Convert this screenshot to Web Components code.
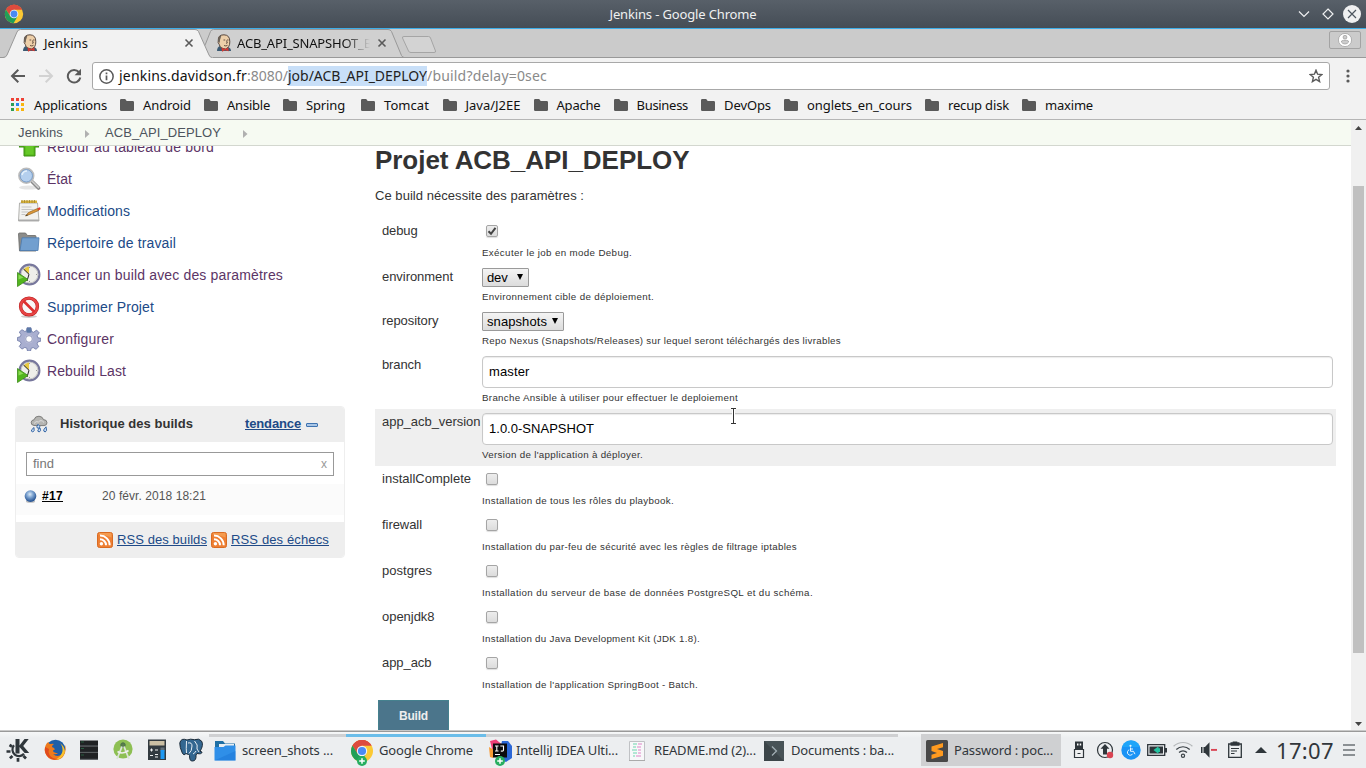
<!DOCTYPE html>
<html lang="fr">
<head>
<meta charset="utf-8">
<title>Jenkins</title>
<style>
html,body{margin:0;height:768px;width:1366px;overflow:hidden;background:#fff}
body{font-family:"Noto Sans",sans-serif;display:flex;flex-direction:column}
</style>
</head>
<body>
<window-title></window-title>
<browser-tabs></browser-tabs>
<address-bar></address-bar>
<bookmark-bar></bookmark-bar>
<jenkins-page></jenkins-page>
<task-bar></task-bar>
<script>
const chrome = `<circle cx="12" cy="12" r="11" fill="#fbc934"/><path d="M12 12 2.5 6.5A11 11 0 0 1 21.5 6.5H12z" fill="#dd4b3e"/><path d="M12 1A11 11 0 0 1 21.6 6.6H12L7.4 14.8 2.4 6.6A11 11 0 0 1 12 1z" fill="#dd4b3e"/><path d="M2.4 6.6A11 11 0 0 0 11.5 23L16.3 14.6 7.5 14.6z" fill="#219f58"/><circle cx="12" cy="12" r="5.2" fill="#f4f4f4"/><circle cx="12" cy="12" r="4.1" fill="#4a8af4"/>`;
const plus = `<circle cx="12" cy="22" r="5" fill="#27ae60"/><path d="M12 19.2v5.6M9.2 22h5.6" stroke="#fff" stroke-width="1.5"/>`;
const clock = `<circle cx="12.5" cy="11.5" r="9.9" fill="#eeeeea" stroke="#77779c" stroke-width="2.100"/><circle cx="12.5" cy="11.5" r="8.4" fill="none" stroke="#b8b8b8" stroke-width=".7"/><path d="M12 11 6.6 6.6A8 8 0 0 1 12 3.6z" fill="#e7c840"/><path d="M6.5 6 12 11.3M12 11.3 10 18" stroke="#222" stroke-width="1"/><path d="M12.5 4v1M19 11.5h1M12.5 19v-1" stroke="#999"/><path d="M.5 9.5v14L11 16.5z" fill="#52b51e" stroke="#3c8a18" stroke-width=".8"/><path d="M1.5 11.5v5l5-2z" fill="#8bdc55"/>`;
const rss = `<rect x=".5" y=".5" width="15" height="15" rx="2" fill="#ee7f33" stroke="#d96b22"/><path d="M1.5 2.5q6 0 13 3V2q0-1-1-1H2.500z" fill="#f9ae63" opacity=".6"/><circle cx="4.4" cy="11.7" r="1.7" fill="#fff"/><path d="M3 7.2a6 6 0 0 1 6 6M3 3.6a9.600 9.600 0 0 1 9.700 9.600" fill="none" stroke="#fff" stroke-width="2"/>`;
const ICONS = {
chrome:['0 0 24 24',chrome],
chromeplus:['0 0 24 28',chrome+plus],
jenkins:['0 0 16 18',`<path d="M1 17q0-4 3-5l8 1q3 1 3 4z" fill="#3b5a72"/><path d="M2.300 6Q2 .8 8 .8q6 .2 5.800 7 .2 5.500-4.300 7.200Q4 14.500 3.300 10.500 1.500 9 2.300 6z" fill="#edcfa9" stroke="#4b3a32" stroke-width=".9"/><path d="M2.200 7.500Q1.500 2 5.500 1.200 4.600 4 4 6l-.3 3z" fill="#6b6259"/><path d="M7.500 6h1.700M11 6h1.500M8 11.500q2 1 3.500-.2M10.500 6.500l.8 2.500-1.300.3" fill="none" stroke="#4a362e" stroke-width=".8"/><path d="M5.500 13.600 9 15l3.300-1.500.4 3.700L9 16.200l-3 1.600z" fill="#cf3b33"/>`],
x:['0 0 10 10','<path d="M1.500 1.500l7 7M8.500 1.500l-7 7" stroke="#5a5a5a" stroke-width="1.600"/>'],
min:['0 0 12 12','<path d="M1 3.500l5 5 5-5" fill="none" stroke="#eff0f1" stroke-width="1.200"/>'],
max:['0 0 12 12','<path d="M6 1l5 5-5 5-5-5z" fill="none" stroke="#eff0f1" stroke-width="1.200"/>'],
close:['0 0 18 18','<circle cx="9" cy="9" r="9" fill="#eff0f1"/><path d="M5 5l8 8M13 5l-8 8" stroke="#4d565f" stroke-width="1.200"/>'],
user:['0 0 14 14','<circle cx="7" cy="7" r="6.600" fill="#fff" stroke="#a5a5a5" stroke-width=".8"/><circle cx="7" cy="4.200" r="1.900" fill="#ccc" stroke="#999" stroke-width=".7"/><path d="M3.300 9q0-1.600 2-1.600h3.400q2 0 2 1.600Q9.500 11 7 11T3.300 9z" fill="#ccc" stroke="#999" stroke-width=".7"/>'],
back:['0 0 16 16','<path d="M15 8H2.500M8.300 1.700 2 8l6.300 6.300" fill="none" stroke="#5a5a5a" stroke-width="2"/>'],
fwd:['0 0 16 16','<path d="M1 8h12.500M7.700 1.700 14 8l-6.300 6.300" fill="none" stroke="#d2d2d2" stroke-width="2"/>'],
reload:['0 0 16 16','<path d="M13 4.200A6.300 6.300 0 1 0 14.300 9.500" fill="none" stroke="#5a5a5a" stroke-width="2"/><path d="M15 .8v6.400H8.600z" fill="#5a5a5a"/>'],
info:['0 0 14 14','<circle cx="7" cy="7" r="6.200" fill="none" stroke="#5a5a5a" stroke-width="1.400"/><path d="M7 6v4.500M7 3.300v1.600" stroke="#5a5a5a" stroke-width="1.600"/>'],
star:['0 0 14 14','<path d="M7 1.200 8.600 5.200l4.300.3-3.300 2.800 1 4.300L7 10.300l-3.600 2.300 1-4.300L1.100 5.500l4.300-.3z" fill="none" stroke="#5a5a5a" stroke-width="1.400"/>'],
dots:['0 0 4 14','<g fill="#5a5a5a"><circle cx="2" cy="2" r="1.600"/><circle cx="2" cy="7" r="1.600"/><circle cx="2" cy="12" r="1.600"/></g>'],
apps:['0 0 13 13','<path fill="#ee4135" d="M0 0h3v3H0zM5 0h3v3H5zM10 0h3v3h-3z"/><path fill="#2f9e54" d="M0 5h3v3H0zM0 10h3v3H0z"/><path fill="#2b86ee" d="M5 5h3v3H5z"/><path fill="#f8b50f" d="M10 5h3v3h-3zM5 10h3v3H5zM10 10h3v3h-3z"/>'],
folder:['0 0 14 12','<path d="M0 1.300Q0 0 1.200 0h4l1.500 2H12.700Q14 2 14 3.200v7.600Q14 12 12.700 12H1.200Q0 12 0 10.700z" fill="#5a5a5a"/>'],
crumb:['0 0 5 8','<path d="M0 0v8l4.500-4z" fill="#b0b0b0"/>'],
up:['0 0 24 24','<path d="M12 1 22 12h-4v9H7v-9H2z" fill="#53b618" stroke="#3f8f15"/><path d="M8.500 5v14.500h8V8z" fill="#66c828"/>'],
search:['0 0 24 24','<ellipse cx="12" cy="20.500" rx="10" ry="2" fill="#e5e5e5"/><path d="M15.500 15l6 6" stroke="#8a8a8a" stroke-width="3.600" stroke-linecap="round"/><path d="M15.500 14.500l6 6" stroke="#cfcfcf" stroke-width="1.700" stroke-linecap="round"/><circle cx="9.300" cy="8.800" r="7.200" fill="#a9c8ec" stroke="#bcbcbc" stroke-width="2"/><circle cx="9.300" cy="8.800" r="6.200" fill="#b4cfee" stroke="#6d93c0" stroke-width=".8"/><path d="M5 8q1-4 5-4" stroke="#e4f0fb" stroke-width="1.500" fill="none"/>'],
notes:['0 0 24 24','<path d="M2.500 4h18l1.500 18H1.500z" fill="#f2f2f0" stroke="#a0a09c" stroke-width=".8"/><path d="M1.500 20.500h20.500v1.500H1.500z" fill="#aaa"/><path d="M4 1.500h16v2.500H4z" fill="#d8b33c"/><path d="M5 1v3M7.500 1v3M10 1v3M12.500 1v3M15 1v3M17.500 1v3" stroke="#a5872b" stroke-width=".8"/><path d="M4.500 8h10M4.500 10.500h12M4.500 13h7M4.500 15.500h4" stroke="#c5c5c5"/><path d="M8.500 17l3-3.500 9-4 1 2-9 4z" fill="#e09a3a" stroke="#8c6023" stroke-width=".7"/><path d="M20.500 9.500 22.500 8.300q1.500.5 1 2l-2 1.200z" fill="#e03a28"/><path d="M8.500 17l1.500-1.700.8 1.200z" fill="#333"/>'],
work:['0 0 24 24','<path d="M1.500 3q0-1 1-1h6l2 2.500h7.500q1 0 1 1V20H2.500z" fill="#8c8c8a" stroke="#696967" stroke-width=".8"/><path d="M5 6.800h17L21 19.500H3z" fill="#729fcf" stroke="#4a7ab0" stroke-width=".8"/>'],
run:['0 0 24 24',clock],
deny:['0 0 24 24','<ellipse cx="12" cy="21.500" rx="8" ry="1.500" fill="#ccc"/><circle cx="12" cy="11.500" r="8.400" fill="#f8f8f8" stroke="#b82020" stroke-width="3.400"/><circle cx="12" cy="11.500" r="8.400" fill="none" stroke="#e84545" stroke-width="2.400"/><path d="M6.500 6l11 11" stroke="#dd3030" stroke-width="2.600"/>'],
gear:['0 0 24 24','<path d="M10 .8h4l.6 3.700 2 .8 3-2.200 2.600 2.700-2.100 3 .8 2 3 .5v2.800l-3 .8-.9 2 1.800 2.700-2.800 2.700-2.800-1.800-2 .8-.7 2.700h-3l-.7-2.800-2-.8-2.900 1.700-2.600-2.600 1.800-2.900-.8-2L.4 13.500v-3L3.200 9.800l.9-2L2.300 5 5 2.700l2.800 1.800 1.700-.7z" fill="#a9afd0" stroke="#7580ab" stroke-width=".9"/><path d="M10 .8h4l.6 4.500q-2.600 1-5.200 0z" fill="#5c7aa8"/><circle cx="12" cy="12" r="4.200" fill="#c5c8e0"/><circle cx="12" cy="12" r="3.300" fill="#fff" stroke="#8089b0" stroke-width=".8"/>'],
rain:['0 0 18 18','<path d="M4 10.500Q.8 10 1.200 7.200 1.500 5 4 4.800 5 1 9 1.200q3.500.2 4.500 3.400 3.500.2 3.500 3.200 0 2.500-3 2.800z" fill="#b5b5b2" stroke="#757573" stroke-width=".9"/><path d="M4 8.500q2-3 4.500-1.500Q11 4 14 7.500" fill="none" stroke="#dedede"/><g fill="#cfe0f3" stroke="#3465a4" stroke-width="1"><path d="M8 9.300q3 2 1 4-2 .3-2.200-1.500zM4 12.500q.8 4-1.200 4.500-2.300-.5-1-2.400zM10 12.800q1.500 3.500-.8 4.200-2.300-.5-1-2.400zM16 11.800q1.500 4.500-.8 5.200-2.300-.5-1.200-2.700z"/></g>'],
collapse:['0 0 12 4','<rect x=".5" y=".5" width="11" height="3" rx=".5" fill="#a9c6e6" stroke="#3f73b0"/>'],
ball:['0 0 14 14','<defs><radialGradient id="g" cx=".45" cy=".35" r=".6"><stop offset="0" stop-color="#dcebf8"/><stop offset=".45" stop-color="#7fa5d2"/><stop offset="1" stop-color="#2a5796"/></radialGradient></defs><ellipse cx="7" cy="12.500" rx="5" ry="1.300" fill="#bbb"/><circle cx="7" cy="6.500" r="6.300" fill="url(#g)"/>'],
rss:['0 0 16 16',rss],
kde:['0 0 24 24','<path d="M8 7.300a6 6 0 1 0 10 8.500" fill="none" stroke="#2f363b" stroke-width="2.200"/><path d="M6 8.500 3.500 7M4.500 13.500H.5M6.500 18l-2.600 2.300M12 20v3.800M17.500 18l2.500 2.500" stroke="#2f363b" stroke-width="2.700"/><path d="M9.500 1h4v6.500L18.500 1h4.200l-5.500 7 6 7h-4.500l-5.200-6v6.500h-4z" fill="#2f363b"/>'],
firefox:['0 0 24 24','<circle cx="12.500" cy="11.500" r="9.800" fill="#1f5fa8"/><path d="M4 5Q1 9 2 14q2 7 9 8 8 .5 10.500-6 2-5 .5-9 .5 7-3 9.500-5 3-9-.5 3 1 5-1-4 0-5-2 0-1.500 2-1.500-.500-2-3-2.500 0-2 2-3-2-.500-3 0Q5.500 6.500 5.500 4z" fill="#ee7a1c"/><path d="M17 5q6 5 4.500 10-2 6-9.500 7 7-4 7.500-9 .3-5-2.500-8z" fill="#fac22c"/><path d="M2 9q-1 6 3 10 5 4 10 2-6 0-8.500-4Q5 13 6 11z" fill="#e14b1d"/>'],
rack:['0 0 24 24','<path d="M3 2.500h18v5.300H3zM3 8.300h18v5.800H3zM3 14.600h18v6.900H3z" fill="#202224"/><path d="M3 7.800h18M3 14.200h18M3 21h18" stroke="#3c4145" stroke-width=".9"/><path d="M4 4h3M4 10.500h3M4 17h3" stroke="#2a6a45" stroke-width=".8"/>'],
studio:['0 0 24 24','<circle cx="12" cy="11" r="9.600" fill="#8dbf53"/><circle cx="12" cy="7" r="2.200" fill="#5a7f4c" stroke="#49704a"/><path d="M11 8.500 6 21M13 8.500 18 21" stroke="#dce4d8" stroke-width="1.800"/><path d="M6.500 13.500q5 3.500 11-1" fill="none" stroke="#eee" stroke-width="1.600"/>'],
calc:['0 0 24 24','<path d="M3 1.500h18v20.500H3z" fill="#323a40"/><path d="M4.500 3h15v4.500h-15z" fill="#cbbfa4"/><path d="M15.500 9.500h4v4h-4z" fill="#63707a"/><path d="M15.500 12h4v9h-4z" fill="#1d99f3"/><path d="M5 12h3M6.500 10.500v3M10 12h3M5 17.500h3M10 16.500h3M10 19h3" stroke="#eee"/>'],
pg:['0 0 24 24','<path d="M8 2Q2-.5.800 5 .5 9 3.500 15.500 5 18 7 15.500l1 .5q2 0 2.500 1.500 0 6 3 5.500 4 0 3.500-6l1-1.500q5 1 5-1.500l-2-.7Q25 7 22.500 3 20 0 15.500 1.700q-4-1.200-7.500.3z" fill="#336791" stroke="#1d2c3a"/><path d="M7.500 3Q7 12 7.500 15M9 5q4-1 4 3 0 5-3 7.500M15.500 3q4 4 2.500 8l2 3M14 16q2-1 3-3" fill="none" stroke="#e8eef4" stroke-width="1"/>'],
dir:['0 0 24 24','<path d="M2 2h8l2 2.500h10V12H2z" fill="#1e6fa5"/><path d="M6 5h15v3H6z" fill="#e9eef2"/><path d="M1.500 8h9l2-1.500H22.500V21.500h-21z" fill="#2f8fe8"/><path d="M1.500 21.500 22.500 12v9.500z" fill="#1c75d6" opacity=".5"/>'],
ij:['0 0 24 28','<path d="M2 2 8 .5l6 5L9 18l-7-1L4 10z" fill="#ef3f76"/><path d="M1 8l7 4-3 7-3-1z" fill="#f89b35"/><path d="M14 2h6l4 5v12l-6 4-8-3z" fill="#2b67d6"/><path d="M5 4.500h14v14H5z" fill="#0b0b0d"/><path d="M7 7h3.500M8.800 7v5M7 12h3.500M12.300 7h3.200v4q0 1.500-2.700 1M7 15.500h5" fill="none" stroke="#fff" stroke-width="1.100"/>'+plus],
readme:['0 0 24 24','<path d="M4.500 2.500h15V21.500h-15z" fill="#f8f8fa" stroke="#c0c2c5"/><path d="M4 21.500h16" stroke="#aaa"/><path d="M8 5h4M8 8h3M7 11h5M8 14h4M8 17h2" stroke="#9be0c8" stroke-width="1.500"/><path d="M13 5h4M12 8h4M13 11h3M13 14h3M11 17h5" stroke="#e7abd9" stroke-width="1.500"/>'],
term:['0 0 24 24','<path d="M2 2h20v20H2z" fill="#3c4549"/><path d="M2 2h20v20z" fill="#485357"/><path d="M10 7.500l4.500 4.500L10 16.500" fill="none" stroke="#a5b1b6" stroke-width="1.200"/>'],
sublime:['0 0 24 24','<rect x="1" y="1" width="22" height="22" rx="1.500" fill="#484848"/><path d="M6.500 7.500 18 4v4.200L12 10l6 2v4.700L6.500 20v-4.200L12 14l-5.500-2z" fill="#ff9a1f"/>'],
usb:['0 0 20 20','<path d="M6 1.500h8V9H6z" fill="#2f363b"/><path d="M8 3.500h1.500v2H8zM10.700 3.500h1.500v2h-1.500z" fill="#fff"/><path d="M5.500 9.500h9v8h-9z" fill="#eff0f1" stroke="#2f363b" stroke-width="1.200"/><path d="M8.500 13.500h3" stroke="#2f363b"/>'],
upd:['0 0 20 20','<circle cx="10" cy="10" r="7.500" fill="none" stroke="#2f363b" stroke-width="1.200"/><path d="M10 4l4.500 4.700H12v5.800H8V8.700H5.500z" fill="#2f363b"/><circle cx="15" cy="15" r="3.200" fill="#da4453"/>'],
acc:['0 0 20 20','<circle cx="10" cy="10" r="9.700" fill="#1a93f5"/><path d="M1 7A9.500 9.500 0 0 1 19 7z" fill="#23b0fb" opacity=".6"/><circle cx="9.500" cy="5.800" r="1.100" fill="#e8f5ff"/><path d="M9.500 7.500v3.800h3l1.500 2.900M9.500 9h2.500M8.200 9.800a2.800 2.800 0 1 0 3.500 3.900" fill="none" stroke="#e8f5ff" stroke-width="1"/>'],
bat:['0 0 20 20','<path d="M.700 4.700h17v10.600H.7z" fill="none" stroke="#2f363b" stroke-width="1.300"/><path d="M2.500 6.500h13.500v7H2.500z" fill="#2f363b"/><path d="M18 8h2v4.500h-2z" fill="#2f363b"/><path d="M6.500 10l5-3.800v2h1.500v3.700h-1.500v2z" fill="#24c3a0"/>'],
wifi:['0 0 20 20','<g fill="none" stroke="#3b4247" stroke-width="1.200"><circle cx="10" cy="15.800" r="1.600"/><path d="M6 12.500a5.600 5.600 0 0 1 8 0M3.300 9.500a9.500 9.500 0 0 1 13.400 0"/><path d="M.600 6.300a13.500 13.500 0 0 1 18.800 0" stroke="#b5b8ba"/></g>'],
vol:['0 0 20 20','<path d="M2 7h1.500v6H2zM4.500 7H6l4.500-4.800v15.600L6 13H4.500z" fill="#2f363b"/><path d="M12 9.900h6" stroke="#da4453" stroke-width="1.900"/>'],
clip:['0 0 20 20','<path d="M3.700 4h12.600v13.300H3.700z" fill="none" stroke="#2f363b" stroke-width="1.300"/><path d="M5.500 2.200h2.200V1.500h4.600v.7h2.200v3.600h-9z" fill="#2f363b"/><path d="M6 8.500h8M6 11h6M6 13.500h3.500" stroke="#2f363b" stroke-width="1.200"/>'],
tri:['0 0 20 20','<path d="M4 13 10 7l6 6z" fill="#2f363b"/>'],
menu:['0 0 12 12','<path d="M0 1h12M0 6h12M0 11h12" stroke="#8b9094" stroke-width="2"/>'],
beam:['0 0 7 18','<path d="M1 1h5M1 17h5M3.500 1v16" fill="none" stroke="#fff" stroke-width="3"/><path d="M1 1.500h5M1 16.500h5M3.500 1.500v15" fill="none" stroke="#333" stroke-width="1"/>']
};
const ic = (n,w,h) => `<ui-icon name="${n}" w="${w}" h="${h||w}"></ui-icon>`;
const ft = (t,w,c='') => `<fit-text w="${w}" class="${c}">${t}</fit-text>`;
class Base extends HTMLElement {
  connectedCallback(){
    if(this.shadowRoot) return;
    const t = document.createElement('template');
    t.innerHTML = `<style>*{box-sizing:border-box}:host{display:block;box-sizing:border-box}${this.css()}</style>${this.html()}`;
    this.attachShadow({mode:'open'}).append(t.content.cloneNode(true));
  }
  a(n){return this.getAttribute(n)||''}
}
const def = (n,css,html) => customElements.define(n, class extends Base {
  css(){return typeof css==='function'?css(this):css}
  html(){return typeof html==='function'?html(this):html}
});

def('ui-icon', e=>`:host{flex:none;width:${e.a('w')}px;height:${e.a('h')}px}svg{display:block;width:100%;height:100%}`,
  e=>{const [vb,body]=ICONS[e.a('name')];return `<svg viewBox="${vb}" aria-hidden="true">${body}</svg>`});

def('window-title',`:host{height:29px;flex:none;background:linear-gradient(#586069,#454d56);border-bottom:1px solid #3daee9}
.bar{display:grid;grid-template-columns:84px 1fr 84px;height:28px;align-items:center;color:#eff0f1;font-size:13px;line-height:18px}
.l{padding-left:4px}.m{display:flex;justify-content:center}.r{display:flex;align-items:center;justify-content:flex-end;padding-right:5px;gap:12px}.r ui-icon:last-child{margin-left:-3px}`,
`<div class="bar"><div class="l">${ic('chrome',20)}</div><div class="m">${ft('Jenkins - Google Chrome',147)}</div><div class="r">${ic('min',12)}${ic('max',12)}${ic('close',18)}</div></div>`);

def('browser-tabs',`:host{height:29px;flex:none;background:#cbcbcb;display:grid}svg,.row{grid-area:1/1}svg{width:1366px;height:29px;display:block}
.row{z-index:1;display:flex;align-items:center;height:28px;font-size:13px;line-height:18px;color:#111;padding-left:22px}
.t2{-webkit-mask-image:linear-gradient(90deg,#000 112px,transparent 138px);mask-image:linear-gradient(90deg,#000 112px,transparent 138px);width:138px}
.u{margin:-7px 5px 0 auto;width:32px;height:18px;border:1px solid #a3a3a3;border-radius:2px;display:grid;place-items:center}
fit-text{margin:-1px 0 0 6px}.t2 fit-text{margin-left:5px}`,
`<svg viewBox="0 0 1366 29"><path d="M0 28.500H1366" stroke="#999"/><path d="M198 28.500 205.500 15l5-12.500q.8-2 3-2H388q2.500 0 3.500 2l10 24q1 2 3 2z" fill="#d0d0d0" stroke="#999"/><path d="M3 29q3-.5 4-3L17 3q1-2.500 3.500-2.500H195q2.500 0 3.500 2L209 26q1 2.500 3.500 2.500V30H3z" fill="#f2f2f2"/><path d="M0 28.500H3q3 0 4-2.500L17 3q1-2.500 3.500-2.500H195q2.500 0 3.500 2L209 26q1 2.500 3 2.500" fill="none" stroke="#999"/><path d="M404 7.500h24.500q1.500 0 2 1.500l5 13q.5 1.500-1.500 1.500H411q-2 0-2.500-1.500l-6-13q-.5-1.500 1.500-1.500z" fill="#d3d3d3" stroke="#a5a5a5"/></svg>
<div class="row">${ic('jenkins',16,18)}${ft('Jenkins',44)}<span style="width:96px"></span>${ic('x',10)}<span style="width:22px"></span>${ic('jenkins',16,18)}<div class="t2">${ft('ACB_API_SNAPSHOT_B',135)}</div><span style="width:7px"></span>${ic('x',10)}<div class="u">${ic('user',14)}</div></div>`);

def('address-bar',`:host{height:34px;flex:none;background:#f2f2f2}
.row{display:flex;align-items:center;height:34px;padding:2px 0 0 10px}.n{display:flex;gap:12px;width:82px}
.box{width:1238px;height:28px;border:1px solid #a8a8a8;border-radius:3px;background:#fff;display:flex;align-items:center;padding:0 6px 0 6px;font-size:14px;line-height:20px;color:#8a8a8a}
.d{color:#111;margin-left:5px}.s{background:#c8dff8;color:#222}.st{margin-left:auto}.k{margin-left:16px}`,
`<div class="row"><div class="n">${ic('back',16)}${ic('fwd',16)}${ic('reload',16)}</div><div class="box">${ic('info',15)}${ft('jenkins.davidson.fr',128,'d')}${ft(':8080/',41)}${ft('job/ACB_API_DEPLOY',139,'s')}${ft('/build?delay=0sec',120)}<div class="st">${ic('star',14)}</div></div><div class="k">${ic('dots',4,14)}</div></div>`);

def('bookmark-bar',`:host{height:28px;flex:none;background:#f2f2f2;border-bottom:1px solid #b5b5b5;font-size:13px;line-height:18px;color:#111}
.row{display:flex;align-items:center;height:25px;padding-left:11px}.row>div{display:flex;align-items:center;margin-right:13px;gap:9px}.row>.ap{gap:10px}`,
`<div class="row"><div class="ap">${ic('apps',13)}${ft('Applications',73)}</div>${[['Android',48],['Ansible',43],['Spring',39,16],['Tomcat',45,13.500],['Java/J2EE',55],['Apache',44],['Business',51.500],['DevOps',47],['onglets_en_cours',105],['recup disk',61],['maxime',48]].map(b=>`<div style="margin-right:${b[2]||13}px">${ic('folder',14,12)}${ft(b[0],b[1])}</div>`).join('')}</div>`);

def('bread-crumbs',`:host{height:26px;background:#f6faf2;border-bottom:1px solid #d3d7cf;font-size:13px;line-height:18px;color:#4d545d}.r{display:flex;align-items:center;height:25px;padding-left:18px}ui-icon{margin:2px 0 0 22px}.b{margin-left:15px}`,
`<div class="r">${ft('Jenkins',45)}${ic('crumb',5,8)}${ft('ACB_API_DEPLOY',116,'b')}${ic('crumb',5,8)}</div>`);

def('side-tasks',`:host{margin-top:-15px}a{display:flex;align-items:center;height:32px;gap:6px;padding-left:17px;font-size:14px;line-height:18px;color:#204a87}a.v{color:#5c3566}`,
()=>[['up','Retour au tableau de bord',167,1],['search','État',25,1],['notes','Modifications',83],['work','Répertoire de travail',129],['run','Lancer un build avec des paramètres',236,1],['deny','Supprimer Projet',107],['gear','Configurer',67,1],['run','Rebuild Last',79,1]].map(i=>`<a class="${i[3]?'v':''}">${ic(i[0],24)}${ft(i[1],i[2])}</a>`).join(''));

def('build-history',`:host{margin:19px 0 0 15px;width:330px;height:152px;border:1px solid #eee;border-radius:4px;overflow:hidden;font-size:13px;line-height:18px;background:#fff}
.h{height:35px;background:#eee;display:flex;align-items:center;padding:0 0 1px 14px;font-weight:bold;color:#333}.h .t{margin-left:12px}.h .a{margin:0 5px 0 52px;color:#204a87;text-decoration:underline}.h ui-icon:last-child{margin-top:1px}
.i{margin:10px 10px 8px;height:24px;border:1px solid #999;display:flex;align-items:center;justify-content:space-between;padding:0 6px;color:#777}
.i span{font-size:12px;color:#999}
.b{height:31px;background:#fbfbfb;display:flex;align-items:flex-start;padding:3px 0 0 8px;font-size:12px;color:#555}.b ui-icon{margin-top:3px}.b .n{font-weight:bold;color:#000;text-decoration:underline;margin:0 39px 0 5px}
.f{margin-top:7px;height:36px;background:#eee;display:flex;align-items:center;justify-content:flex-end;padding-right:15px;color:#204a87;gap:4px}.f fit-text{text-decoration:underline}`,
`<div class="h">${ic('rain',18)}${ft('Historique des builds',133,'t')}${ft('tendance',56,'a')}${ic('collapse',12,4)}</div><div class="i">${ft('find',21)}<span>x</span></div><div class="b">${ic('ball',13)}${ft('#17',21,'n')}${ft('20 févr. 2018 18:21',104)}</div><div class="f">${ic('rss',16)}${ft('RSS des builds',90)}${ic('rss',16)}${ft('RSS des échecs',98)}</div>`);

def('param-row',e=>`:host{display:flex;height:${{check:46,select:44,text:57}[e.a('kind')]}px;font-size:13px;line-height:18px;color:#333;padding-left:7px}
:host([hot]){background:#efefef}.l{width:100px;padding-top:4px}.c{flex:none;width:851px}
.check{width:12px;height:12px;margin:7px 0 0 4px;border:1px solid #a5a5a5;border-radius:2px;background:linear-gradient(#ededed,#dcdcdc);box-shadow:0 1px 1px #0002}.check svg{display:block;width:10px;height:10px}
.select{display:flex;align-items:center;justify-content:space-between;margin-top:4px;height:19px;border:1px solid #9a9a9a;border-radius:1px;background:linear-gradient(#f4f4f4,#dcdcdc);padding:0 5px 0 4px;width:${e.a('bw')}px;color:#000}.select svg{width:6px;height:6px;margin-top:-2px}
.text{display:flex;align-items:center;margin-top:4px;height:32px;border:1px solid #c8c8c8;border-radius:4px;background:#fff;box-shadow:inset 0 1px 1px #00000014;padding:0 6px;color:#000}
.d{font-size:9.750px;line-height:12px;color:#333;margin-top:${{check:10,select:4,text:4}[e.a('kind')]}px}`,
e=>{const k=e.a('kind'),v=e.a('val');const inner=k==='check'?(v?'<svg viewBox="0 0 10 10"><path d="M1.500 5.200l2.500 2.600 4.500-6" fill="none" stroke="#444" stroke-width="2"/></svg>':''):ft(v,e.a('vw'))+(k==='select'?'<svg viewBox="0 0 6 6"><path d="M0 0h6L3 6z" fill="#000"/></svg>':'');
return `<div class="l">${ft(e.a('label'),e.a('lw'))}</div><div class="c"><div class="${k}">${inner}</div><div class="d">${ft(e.a('desc'),e.a('dw'))}</div></div>`});

def('param-form',`:host{width:961px;margin-left:30px;font-size:13px;line-height:20px;color:#333}
h1{margin:0;font-size:26px;line-height:29px;height:30px}p{margin:10px 0 12px}.btn{margin:4px 0 0 3px;width:71px;height:32px;background:#4b758b;border:1px solid #45818e;display:grid;place-items:center;color:#eee;font-weight:bold;font-size:12px}.cur{position:absolute;left:730px;top:287px}`,
()=>{const r=[['check','debug',35.500,'1',0,0,'Exécuter le job en mode Debug.',150],['select','environment',71,'dev',20.500,47,'Environnement cible de déploiement.',172],['select','repository',56.500,'snapshots',60,82,'Repo Nexus (Snapshots/Releases) sur lequel seront téléchargés des livrables',359],['text','branch',39,'master',40.500,0,'Branche Ansible à utiliser pour effectuer le deploiement',256],['text','app_acb_version',98.500,'1.0.0-SNAPSHOT',105,0,"Version de l'application à déployer.",161],['check','installComplete',89,'',0,0,'Installation de tous les rôles du playbook.',192],['check','firewall',40,'',0,0,'Installation du par-feu de sécurité avec les règles de filtrage iptables',315],['check','postgres',50,'',0,0,'Installation du serveur de base de données PostgreSQL et du schéma.',331],['check','openjdk8',52.500,'',0,0,'Installation du Java Development Kit (JDK 1.8).',218],['check','app_acb',49.500,'',0,0,"Installation de l'application SpringBoot - Batch.",216]];
return `<h1>${ft('Projet ACB_API_DEPLOY',314.500)}</h1><p>${ft('Ce build nécessite des paramètres :',209)}</p>`+r.map((x,i)=>`<param-row kind="${x[0]}" label="${x[1]}" lw="${x[2]}" val="${x[3]}" vw="${x[4]}" bw="${x[5]}" desc="${x[6]}" dw="${x[7]}"${i===4?' hot':''}></param-row>`).join('')+`<div class="btn">${ft('Build',29)}</div><div class="cur">${ic('beam',7,18)}</div>`});

def('scroll-bar',`:host{width:15px;height:610px;background:#f0f0f0;display:flex;flex-direction:column;align-items:center}svg{width:9px;height:5px;margin-top:5px;flex:none}.t{width:11px;height:467px;background:#c0c0c0;margin:56px 0 64px;flex:none}`,
`<svg viewBox="0 0 9 5"><path d="M1 5 4.500 1 8 5z" fill="#444"/></svg><div class="t"></div><svg viewBox="0 0 9 5"><path d="M1 0h7L4.500 4z" fill="#444"/></svg>`);

def('jenkins-page',`:host{height:610px;flex:none;position:relative;overflow:hidden;font-family:"Liberation Sans",Arial,sans-serif;background:#fff}.o{display:grid;grid-template-columns:1351px 15px;height:610px}.m{display:flex;height:584px;overflow:hidden}.s{width:345px;flex:none}`,
`<div class="o"><div><bread-crumbs></bread-crumbs><div class="m"><div class="s"><side-tasks></side-tasks><build-history></build-history></div><param-form></param-form></div></div><scroll-bar></scroll-bar></div>`);

def('task-item',e=>`:host{width:${e.a('width')}px;flex:none;height:32px;border-top:3px solid ${e.hasAttribute('on')?'#6bbde9':'#cfd0d2'};${e.hasAttribute('fill')?'background:#cfd0d2;':''}}
:host([sep]){border-image:linear-gradient(90deg,${e.hasAttribute('on')?'#6bbde9':'#cfd0d2'} calc(100% - 3px),${e.hasAttribute('on')?'#5aa5cf':'#b3b5b7'} calc(100% - 3px)) 3}
.r{display:flex;align-items:center;height:27px;padding-left:${e.a('pad')}px;gap:${e.a('gap')}px}.w{height:24px}fit-text{margin-top:-2px}`,
e=>`<div class="r"><div class="w">${ic(e.a('icon'),e.a('iw')||24,e.a('ih')||24)}</div>${ft(e.a('label'),e.a('tw'))}</div>`);

def('task-bar',`:host{height:38px;flex:none;color:#31363b;font-size:13px;line-height:18px;background:linear-gradient(#c9c9c9 0 1px,#999 1px 2px,#f6f7f8 2px,#eceef0 8px)}
.r{display:flex;padding-top:4px;height:38px}.q{display:flex;align-items:flex-start;padding:4px 0 0 6px;gap:10px;width:209px;flex:none}.q ui-icon:first-child{margin-right:3px}
.tray{display:flex;align-items:center;height:32px;padding-left:8px;gap:6px}.c{font-size:22px;line-height:28px;margin:-1px 0 0 -1px}.tray ui-icon:last-child{margin-left:3px}`,
`<div class="r"><div class="q">${['kde','firefox','rack','studio','calc','pg'].map(n=>ic(n,24)).join('')}</div>
<task-item width="137" icon="dir" label="screen_shots ..." tw="91" pad="4" gap="5"></task-item>
<task-item on sep width="140" icon="chromeplus" ih="28" label="Google Chrome" tw="94" pad="4" gap="5"></task-item>
<task-item sep width="137" icon="ij" ih="28" iw="24" label="IntelliJ IDEA Ulti..." tw="102" pad="2" gap="4"></task-item>
<task-item sep width="138" icon="readme" label="README.md (2)..." tw="102" pad="2" gap="5"></task-item>
<task-item width="137" icon="term" label="Documents : ba..." tw="103" pad="1" gap="5"></task-item>
<span style="width:23px"></span>
<task-item fill width="140" icon="sublime" label="Password : poc..." tw="99" pad="4" gap="5"></task-item>
<div class="tray">${['usb','upd','acc','bat','wifi','vol','clip','tri'].map(n=>ic(n,20)).join('')}${ft('17:07',58,'c')}${ic('menu',12)}</div></div>`);

/* Text that spreads its letters evenly over a given width. */
customElements.define('fit-text', class extends HTMLElement {
  connectedCallback(){
    if(this.shadowRoot) return;
    const w = parseFloat(this.getAttribute('w'));
    const r = this.attachShadow({mode:'open'});
    r.innerHTML = `<style>:host{display:block;flex:none;white-space:pre;width:${w}px}span{display:inline-block;text-decoration:inherit}</style><span><slot></slot></span>`;
    const s = r.querySelector('span');
    const d = (w - s.getBoundingClientRect().width) / this.textContent.length;
    s.style.letterSpacing = d.toFixed(3) + 'px';
  }
});
</script>
</body>
</html>
